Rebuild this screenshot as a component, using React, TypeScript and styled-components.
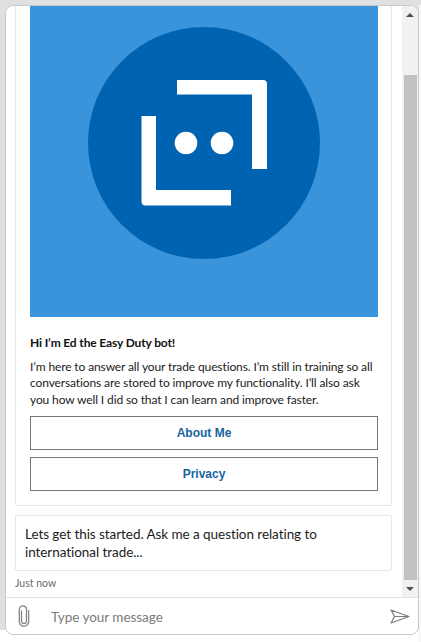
import React from 'react';
import styled, { createGlobalStyle } from 'styled-components';

const GlobalStyle = createGlobalStyle`
    html, body {
        margin: 0;
        padding: 0;
        height: 100%;
        overflow: hidden;
    }

    body {
        background:
            linear-gradient(to right, transparent 419px, #f7f7f7 419px) 0 5px no-repeat,
            linear-gradient(to bottom, #e0e0e0 630px, #ffffff 630px);
        font-family: Lato, "Open Sans", sans-serif;
    }
`;

const Widget = styled.div`
    box-sizing: border-box;
    width: 414px;
    height: 630px;
    margin: 5px 0 0 5px;
    display: flex;
    flex-direction: column;
    background: #ffffff;
    border: 1px solid #c8c8c8;
    border-radius: 8px;
    overflow: hidden;
`;

const Body = styled.div`
    flex: 1;
    min-height: 0;
    display: flex;
`;

const History = styled.div`
    flex: 1;
    min-width: 0;
    display: flex;
    flex-direction: column;
    justify-content: flex-end;
    overflow: hidden;
    padding: 0 10px 7px 9px;
`;

const Card = styled.div`
    flex-shrink: 0;
    box-sizing: border-box;
    padding: 0 13px 14px 14px;
    background: #ffffff;
    border: 1px solid #e6e6e6;
    border-top: none;
    border-radius: 0 0 2px 2px;
`;

const Hero = styled.svg`
    display: block;
    width: 348px;
    height: 348px;
`;

const Title = styled.div`
    margin-top: 18px;
    font-size: 12px;
    line-height: 16px;
    font-weight: 700;
    letter-spacing: -0.14px;
    color: #111111;
`;

const Copy = styled.p`
    margin: 8px 0 0;
    font-size: 12px;
    line-height: 16.8px;
    letter-spacing: -0.12px;
    color: #222222;
`;

const ActionButton = styled.button`
    display: block;
    box-sizing: border-box;
    width: 100%;
    height: 34px;
    padding: 0 0 1px;
    margin-top: 7px;
    background: #ffffff;
    border: 1px solid #767676;
    font-family: "Liberation Sans", Arial, sans-serif;
    font-size: 12px;
    font-weight: 700;
    color: #17649f;

    & + & {
        padding: 0;
    }
`;

const Actions = styled.div`
    margin-top: 3.6px;
`;

const Bubble = styled.div`
    flex-shrink: 0;
    box-sizing: border-box;
    height: 56px;
    margin-top: 9px;
    padding: 9px 9px;
    background: #ffffff;
    border: 1px solid #e6e6e6;
    border-radius: 2px;
    font-size: 13.5px;
    line-height: 18px;
    letter-spacing: -0.06px;
    color: #1c1c1c;
`;

const Stamp = styled.div`
    flex-shrink: 0;
    margin-top: 5px;
    font-size: 10.5px;
    line-height: 14px;
    color: #6b6b6b;
`;

const ScrollBar = styled.div`
    flex-shrink: 0;
    width: 16px;
    display: flex;
    flex-direction: column;
    align-items: center;
    background: #f1f1f1;
`;

const Arrow = styled.div<{ $down?: boolean }>`
    flex-shrink: 0;
    width: 100%;
    height: 17px;
    display: flex;
    align-items: center;
    justify-content: center;

    &::before {
        content: '';
        border-left: 4px solid transparent;
        border-right: 4px solid transparent;
        ${({ $down }) => ($down ? 'border-top: 4px solid #505050;' : 'border-bottom: 4px solid #505050;')}
    }
`;

const TrackGap = styled.div`
    flex-shrink: 0;
    height: 52px;
`;

const Thumb = styled.div`
    flex: 1;
    width: 13px;
    background: #c1c1c1;
`;

const Composer = styled.div`
    flex-shrink: 0;
    height: 36px;
    display: flex;
    align-items: center;
    border-top: 1px solid #e2e2e2;
`;

const AttachIcon = styled.svg`
    flex-shrink: 0;
    width: 14px;
    height: 22px;
    margin-left: 11px;
`;

const MessageInput = styled.div`
    flex: 1;
    margin-left: 20px;
    padding-top: 2px;
    font-size: 13.5px;
    letter-spacing: -0.03px;
    color: #7a7a7a;
`;

const SendIcon = styled.svg`
    flex-shrink: 0;
    width: 20px;
    height: 15px;
    margin-right: 8px;
`;

export default function App() {
    return (
        <>
            <GlobalStyle />
            <Widget>
                <Body>
                    <History>
                        <Card>
                            <Hero viewBox="0 0 348 348">
                                <rect width="348" height="348" fill="#3a94dc" />
                                <circle cx="174" cy="174" r="116" fill="#0063b1" />
                                <path d="M147 111H233q4 0 4 4V200H222V125.5H147Z" fill="#ffffff" />
                                <path d="M126 147H111.5V232.5q0 4 4 4H201V221H126Z" fill="#ffffff" />
                                <circle cx="156" cy="174" r="11.3" fill="#ffffff" />
                                <circle cx="192" cy="174" r="11.3" fill="#ffffff" />
                            </Hero>
                            <Title>Hi I’m Ed the Easy Duty bot!</Title>
                            <Copy>
                                I’m here to answer all your trade questions. I’m still in training so all conversations are stored to improve my functionality. I’ll also ask you how well I did so that I can learn and improve faster.
                            </Copy>
                            <Actions>
                                <ActionButton>About Me</ActionButton>
                                <ActionButton>Privacy</ActionButton>
                            </Actions>
                        </Card>
                        <Bubble>Lets get this started. Ask me a question relating to international trade...</Bubble>
                        <Stamp>Just now</Stamp>
                    </History>
                    <ScrollBar>
                        <Arrow />
                        <TrackGap />
                        <Thumb />
                        <Arrow $down />
                    </ScrollBar>
                </Body>
                <Composer>
                    <AttachIcon viewBox="0 0 14 22" fill="none" stroke="#7d7d7d" strokeWidth="1.2">
                        <path d="M4.5 5.5V16a2.5 2.5 0 0 0 5 0V4.5a3.6 3.6 0 0 0-7.2 0V16.5a4.7 4.7 0 0 0 9.4 0V5" />
                    </AttachIcon>
                    <MessageInput>Type your message</MessageInput>
                    <SendIcon viewBox="0 0 20 15" fill="none" stroke="#7d7d7d" strokeWidth="1.2" strokeLinejoin="round">
                        <path d="M1 1L19 7.5L1 14L4.5 7.5ZM4.5 7.5H19" />
                    </SendIcon>
                </Composer>
            </Widget>
        </>
    );
}
